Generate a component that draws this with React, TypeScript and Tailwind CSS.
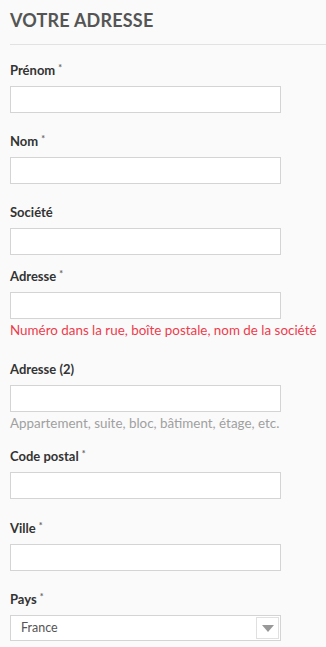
const font = { fontFamily: 'Lato, "Open Sans", sans-serif' };

function Label({ text, required }: { text: string; required?: boolean }) {
  return (
    <label className="block h-4 text-[13px] leading-4 font-bold text-[#333]">
      {text}
      {required && <span className="relative top-[-4px] ml-[3px] text-[9px] leading-none font-bold text-[#666]">*</span>}
    </label>
  );
}

function Input() {
  return <input className="mt-2 block h-[27px] w-[271px] bg-white border border-[#d4d4d4] outline-none" />;
}

export default function App() {
  return (
    <div className="min-h-[647px] w-[326px] bg-[#fafafa] pl-[10px] overflow-hidden" style={font}>
      <h2 className="pt-[9px] h-[44px] text-[18px] leading-[22px] font-bold text-[#555] tracking-[0.2px] uppercase">
        Votre adresse
      </h2>
      <div className="h-px bg-[#e2e2e2]" />

      <div className="pt-[17px] flex flex-col">
        <div>
          <Label text="Prénom" required />
          <Input />
        </div>
        <div className="mt-5">
          <Label text="Nom" required />
          <Input />
        </div>
        <div className="mt-5">
          <Label text="Société" />
          <Input />
        </div>
        <div className="mt-[13px]">
          <Label text="Adresse" required />
          <Input />
          <p className="mt-[2px] text-[13.4px] leading-[18px] text-[#ef3b4c] whitespace-nowrap">
            Numéro dans la rue, boîte postale, nom de la société
          </p>
        </div>
        <div className="mt-[22px]">
          <Label text="Adresse (2)" />
          <Input />
          <p className="mt-[3px] text-[13.4px] leading-[16px] text-[#a0a0a0] whitespace-nowrap">
            Appartement, suite, bloc, bâtiment, étage, etc.
          </p>
        </div>
        <div className="mt-[17px]">
          <Label text="Code postal" required />
          <Input />
        </div>
        <div className="mt-[21px]">
          <Label text="Ville" required />
          <Input />
        </div>
        <div className="mt-5">
          <Label text="Pays" required />
          <div className="mt-2 flex items-center justify-between h-[26px] w-[271px] bg-white border border-[#d4d4d4] pl-[10px] pr-px">
            <span className="text-[12.5px] text-[#555]">France</span>
            <span className="flex items-center justify-center h-[22px] w-[23px] border border-[#e0e0e0] bg-white">
              <svg width="12" height="7" viewBox="0 0 12 7"><path d="M0 0h12L6 7z" fill="#999" /></svg>
            </span>
          </div>
        </div>
      </div>
    </div>
  );
}
